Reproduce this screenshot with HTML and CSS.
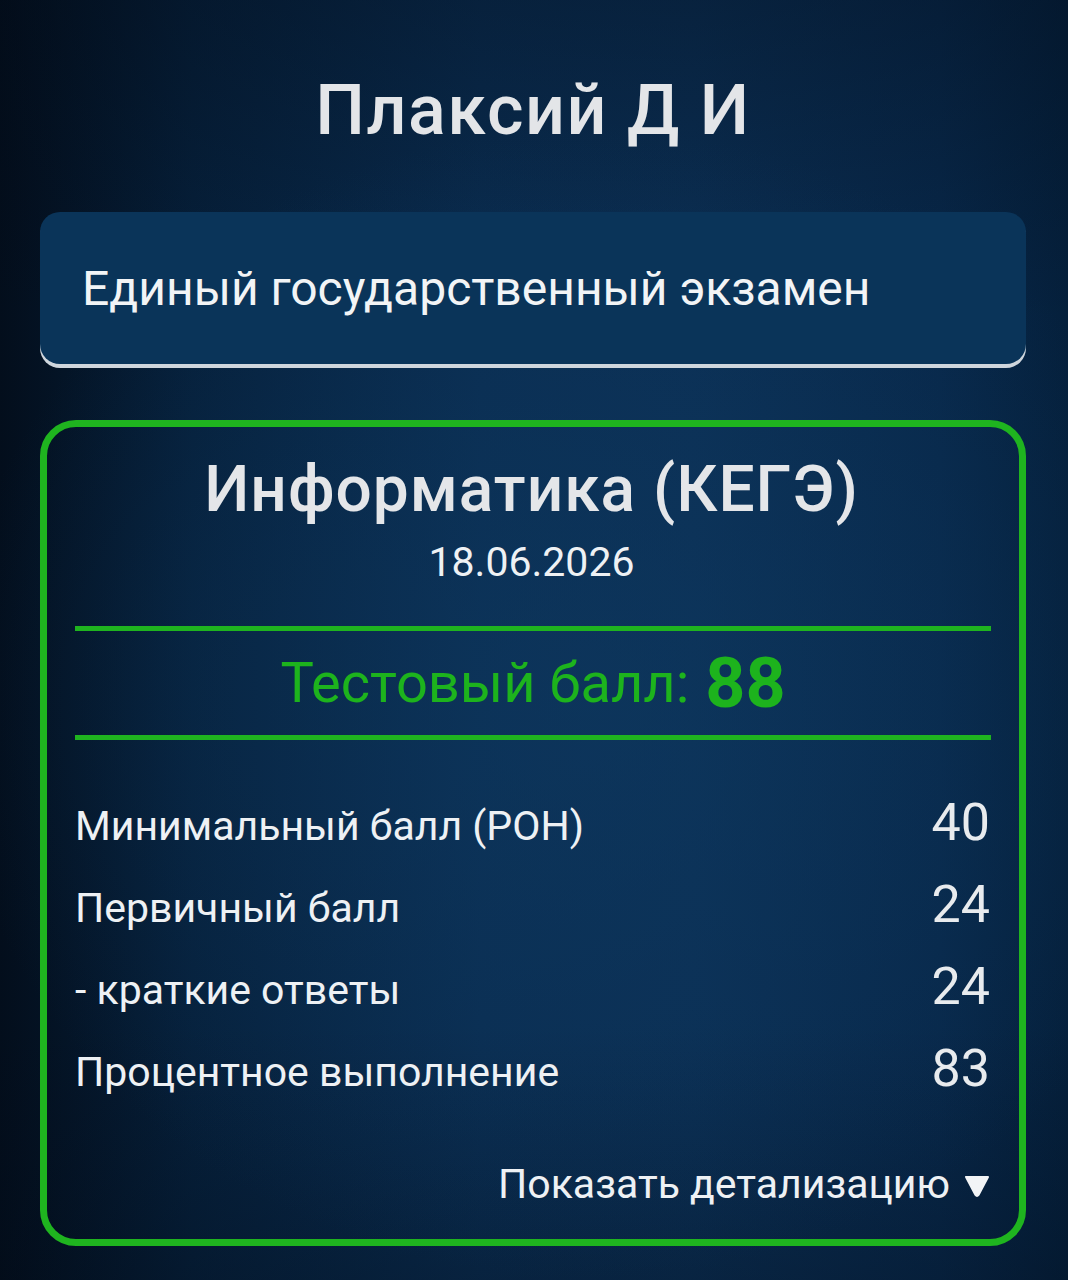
FILE: index.html
```html
<!DOCTYPE html>
<html lang="ru">
<head>
<meta charset="UTF-8" />
<meta name="viewport" content="width=device-width, initial-scale=1" />
<title>Результаты ЕГЭ</title>
<link rel="stylesheet" href="styles.css">
</head>
<body>
  <main class="page">
    <h1 class="student">Плаксий Д И</h1>

    <div class="exam-type">Единый государственный экзамен</div>

    <section class="result">
      <h2 class="subject">Информатика (КЕГЭ)</h2>
      <div class="date">18.06.2026</div>

      <div class="score">Тестовый балл: <b>88</b></div>

      <ul class="details">
        <li><span>Минимальный балл (РОН)</span><span class="num">40</span></li>
        <li><span>Первичный балл</span><span class="num">24</span></li>
        <li><span>- краткие ответы</span><span class="num">24</span></li>
        <li><span>Процентное выполнение</span><span class="num">83</span></li>
      </ul>

      <div class="more">
        Показать детализацию
        <svg class="arrow" width="26" height="22" viewBox="0 0 26 22" aria-hidden="true">
          <path d="M2 2 H24 L14.5 20 Q13 22 11.5 20 Z" fill="#f2f4f6" stroke="#f2f4f6" stroke-width="2" stroke-linejoin="round"/>
        </svg>
      </div>
    </section>
  </main>
</body>
</html>
```

FILE: styles.css
```css
* {
  box-sizing: border-box;
}

html, body {
  margin: 0;
  min-height: 100%;
}

body {
  font-family: Roboto, "Noto Sans", sans-serif;
  color: #eef1f4;
  background:
    radial-gradient(ellipse 60% 45% at 55% 55%, rgba(14, 58, 98, 0.55) 0%, rgba(14, 58, 98, 0) 100%),
    linear-gradient(180deg, rgba(2, 10, 22, 0.35) 0%, rgba(2, 10, 22, 0) 25%, rgba(2, 10, 22, 0) 80%, rgba(2, 10, 22, 0.3) 100%),
    linear-gradient(90deg, #030e1c 0%, #06203b 18%, #0a2d51 45%, #0b2f54 65%, #08284a 88%, #05203c 100%);
  min-height: 1280px;
}

.page {
  padding: 69px 42px 30px 40px;
}

.student {
  margin: 0;
  text-align: center;
  font-size: 70px;
  line-height: 82px;
  font-weight: 500;
  letter-spacing: 1.5px;
  color: #e3e5e8;
}

.exam-type {
  margin-top: 61px;
  height: 152px;
  display: flex;
  align-items: center;
  padding: 0 42px;
  background: #0a3459;
  border-radius: 20px;
  box-shadow: 0 4px 0 #cfd6dd;
  font-size: 48px;
  color: #f2f4f6;
}

/* green result card */
.result {
  margin-top: 56px;
  height: 826px;
  border: 7px solid #1fb41f;
  border-radius: 36px;
  padding: 25px 31px 0 28px;
}

.subject {
  margin: 0;
  text-align: center;
  font-size: 64px;
  line-height: 76px;
  font-weight: 500;
  letter-spacing: 1px;
  color: #e4e6e9;
}

.date {
  text-align: center;
  font-size: 41px;
  line-height: 48px;
  margin-top: 10px;
}

.score {
  margin-top: 40px;
  border-top: 5px solid #1fb41f;
  border-bottom: 5px solid #1fb41f;
  margin-right: -3px;
  height: 114px;
  display: flex;
  align-items: center;
  justify-content: center;
  gap: 16px;
  font-size: 56px;
  color: #1db31d;
}

.score b {
  font-size: 70px;
  font-weight: 700;
}

.details {
  list-style: none;
  margin: 52px 0 0;
  padding: 0;
}

.details li {
  display: flex;
  justify-content: space-between;
  align-items: baseline;
  height: 82px;
  font-size: 41px;
}

.details .num {
  font-size: 52px;
  margin-right: -2px;
  color: #e8ebee;
}

.more {
  margin-top: 40px;
  margin-right: -2px;
  display: flex;
  justify-content: flex-end;
  align-items: center;
  gap: 14px;
  font-size: 41px;
}

.arrow {
  display: block;
  margin-top: 4px;
}
```
